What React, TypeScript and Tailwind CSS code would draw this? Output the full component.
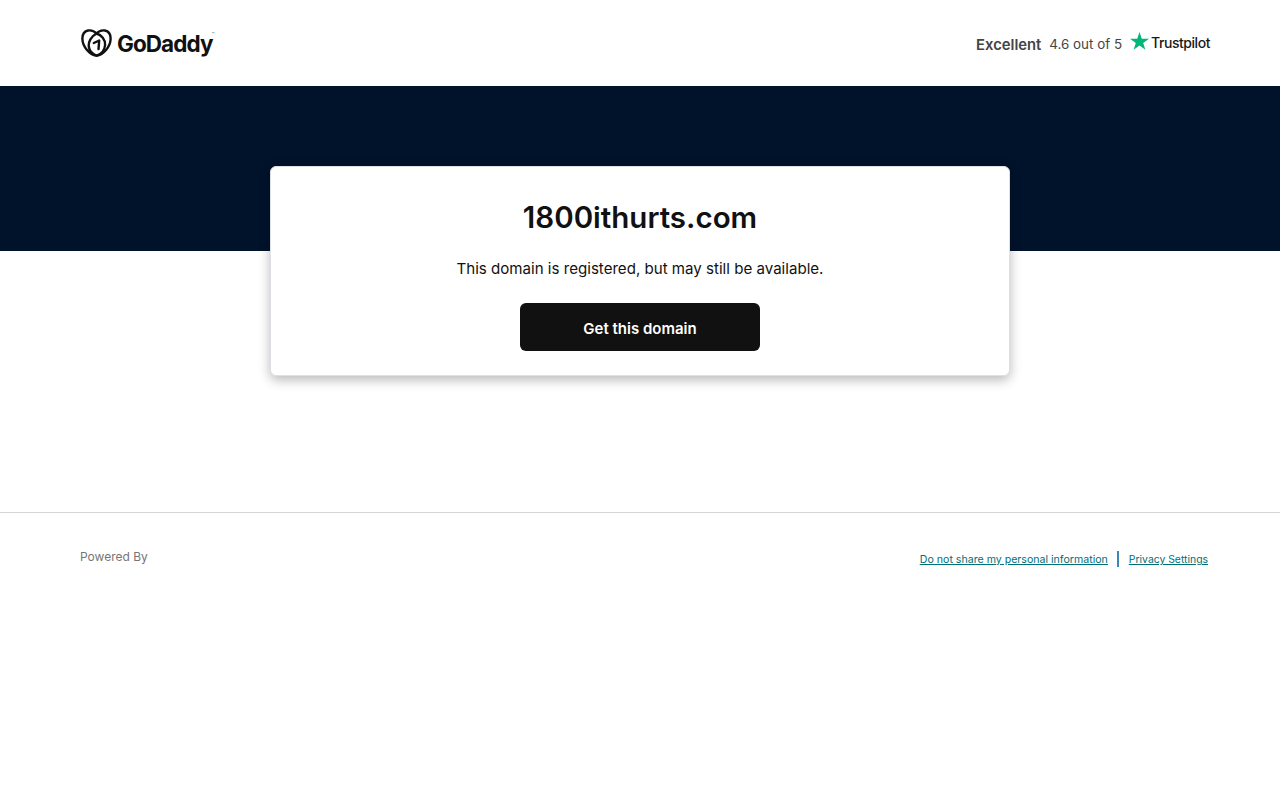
const HeartLogo = () => (
  <svg width="31" height="28" viewBox="0 0 31 28" fill="none" stroke="#111" strokeWidth="2.4" strokeLinecap="round" strokeLinejoin="round">
    <path d="M15.500 4.500C13.400 2.100 10.200 1 7.100 1.500 3.300 2.200 1.300 5.600 1.400 10c.2 7.300 6.800 15.800 14.100 16.600 7.300-.8 13.900-9.300 14.100-16.600.1-4.400-1.900-7.800-5.700-8.500-3.100-.5-6.300.6-8.400 3z" />
    <path d="M15.500 4.500C10 7.500 7.300 13 7.800 17.500c.5 4.700 3.800 7.700 7.700 9.100" />
    <path d="M15.500 4.500c5 1.500 8.900 6 8.600 11.500-.3 4.600-3.800 8.700-7.800 10.300" />
    <path d="M12.800 14l5.400-2.500-.7 8.600" />
  </svg>
)

const App = () => {
  return (
    <div className="min-h-[800px] bg-white font-['Inter',sans-serif] text-[#111]">
      <header className="h-[86px] flex items-center justify-between pl-[81px] pr-[70px]">
        <div className="flex items-center gap-[5px]">
          <HeartLogo />
          <span className="text-[22.5px] font-bold tracking-[-0.95px] leading-none mt-[2px]">GoDaddy</span>
          <span className="text-[5px] text-[#777] -ml-[6px] -mt-[16px]">™</span>
        </div>
        <div className="flex items-center text-[#444]">
          <span className="text-[14.8px] font-semibold mr-2 mt-[4px]">Excellent</span>
          <span className="text-[13.4px] mr-[8px] mt-[2px]">4.6 out of 5</span>
          <svg width="19" height="18" viewBox="0 0 20 19" className="-mt-[5px] mr-[2px]">
            <path fill="#00b67a" d="M10 0l2.400 7.100H20l-6.100 4.400 2.300 7.300L10 14.300l-6.200 4.500 2.300-7.300L0 7.100h7.600z" />
          </svg>
          <span className="text-[14px] font-medium text-[#191919] tracking-[-0.45px] -mt-[1px]">Trustpilot</span>
        </div>
      </header>

      <div className="h-[165px] bg-[#00132b]" />

      <main className="w-[740px] h-[210px] mx-auto -mt-[85px] relative bg-white rounded-[6px] border border-[#dde0e4] shadow-[0_4px_12px_rgba(0,0,0,0.28)] flex flex-col items-center">
        <h1 className="text-[29.500px] font-semibold leading-none mt-[36px]">1800ithurts.com</h1>
        <p className="text-[15.100px] leading-none mt-[28px] text-[#111]">This domain is registered, but may still be available.</p>
        <button className="w-[240px] h-[48px] mt-[27px] pt-[5px] bg-[#111] text-white text-[15px] font-semibold rounded-[6px]">Get this domain</button>
      </main>

      <footer className="mt-[136px] border-t border-[#d4d4d4] flex items-start justify-between pl-[80px] pr-[72px]">
        <span className="text-[12px] text-[#767676] mt-[35px]">Powered By</span>
        <div className="flex items-center mt-[37px] text-[#006f78] underline">
          <a className="pt-[2px] text-[10.600px]">Do not share my personal information</a>
          <span className="w-[2px] h-[16px] bg-[#3a87b8] ml-[9px] mr-[10px]" />
          <a className="pt-[2px] text-[10.400px]">Privacy Settings</a>
        </div>
      </footer>
    </div>
  )
}

export default App
